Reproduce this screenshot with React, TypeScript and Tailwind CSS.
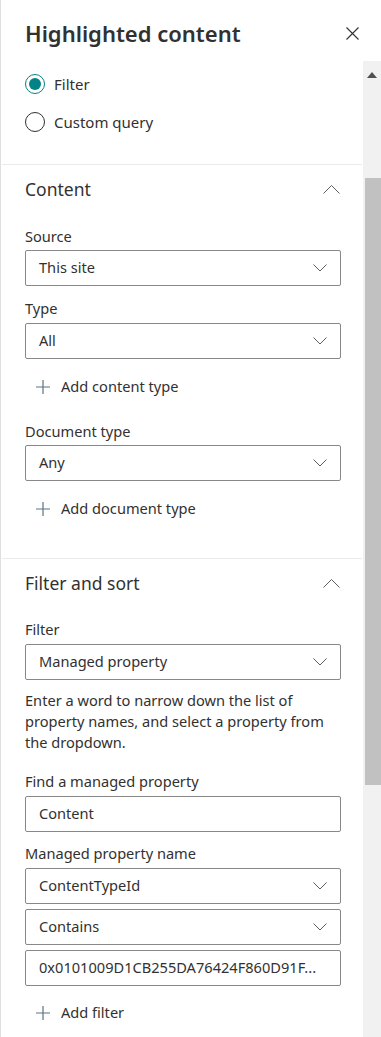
const font = { fontFamily: '"Segoe UI", "Noto Sans", "Open Sans", sans-serif' };

function ChevronDown() {
  return (
    <svg viewBox="0 0 14 8" className="h-[8px] w-[14px]" fill="none" stroke="#605e5c" strokeWidth="1">
      <path d="M0.5 0.5 L7 7 L13.5 0.5" />
    </svg>
  );
}

function ChevronUp() {
  return (
    <svg viewBox="0 0 17 9" className="h-[9px] w-[17px]" fill="none" stroke="#605e5c" strokeWidth="1">
      <path d="M0.5 8.5 L8.5 0.5 L16.5 8.5" />
    </svg>
  );
}

function Plus() {
  return (
    <svg viewBox="0 0 16 16" className="h-[16px] w-[16px]" fill="none" stroke="#5c7482" strokeWidth="1.2">
      <path d="M8 1 V15 M1 8 H15" />
    </svg>
  );
}

function Label({ children, className = "" }: { children: React.ReactNode; className?: string }) {
  return <div className={`h-[20px] text-[14.6px] leading-[20px] text-[#323130] ${className}`}>{children}</div>;
}

function Dropdown({ value, className = "" }: { value: string; className?: string }) {
  return (
    <div
      className={`flex h-[36px] items-center justify-between rounded-[2px] border border-[#8a8886] pl-[13px] pr-[13px] text-[14.6px] text-[#323130] ${className}`}
    >
      <span>{value}</span>
      <ChevronDown />
    </div>
  );
}

function TextBox({ value, className = "" }: { value: string; className?: string }) {
  return (
    <div
      className={`flex h-[36px] items-center overflow-hidden whitespace-nowrap rounded-[2px] border border-[#8a8886] px-[13px] text-[14.6px] text-[#323130] ${className}`}
    >
      {value}
    </div>
  );
}

function AddButton({ text, className = "" }: { text: string; className?: string }) {
  return (
    <div className={`flex h-[32px] items-center gap-[10px] pl-[10px] text-[14.6px] text-[#323130] ${className}`}>
      <Plus />
      <span>{text}</span>
    </div>
  );
}

function SectionHeader({ title }: { title: string }) {
  return (
    <div className="flex h-[48px] items-center justify-between pr-[1px]">
      <span className="text-[17.5px] text-[#323130]">{title}</span>
      <ChevronUp />
    </div>
  );
}

function Radio({ checked, label }: { checked?: boolean; label: string }) {
  return (
    <div className="flex h-[20px] items-center gap-[9px]">
      <div
        className={`flex h-[20px] w-[20px] items-center justify-center rounded-full border ${
          checked ? "border-[#038387]" : "border-[#323130]"
        }`}
      >
        {checked && <div className="h-[12px] w-[12px] rounded-full bg-[#038387]" />}
      </div>
      <span className="text-[15px] text-[#323130]">{label}</span>
    </div>
  );
}

export default function App() {
  return (
    <div className="h-[1037px] w-[381px] overflow-hidden border-l border-[#e1dfdd] bg-white" style={font}>
      {/* Header */}
      <div className="flex h-[61px] items-center justify-between pl-[24px] pr-[22px] pt-[5px]">
        <h1 className="text-[22px] font-semibold text-[#323130]">Highlighted content</h1>
        <svg viewBox="0 0 13 13" className="h-[13px] w-[13px]" fill="none" stroke="#323130" strokeWidth="1.1">
          <path d="M0.5 0.5 L12.5 12.5 M12.5 0.5 L0.5 12.5" />
        </svg>
      </div>

      <div className="flex h-[976px]">
        <div className="flex-1">
          {/* Query type */}
          <div className="mx-[1px] flex flex-col gap-[18px] border-b border-[#edebe9] pb-[32px] pl-[23px] pt-[13px]">
            <Radio checked label="Filter" />
            <Radio label="Custom query" />
          </div>

          {/* Content */}
          <div className="mx-[1px] border-b border-[#edebe9] pb-[33px] pl-[23px] pr-[21px]">
            <SectionHeader title="Content" />
            <Label className="mt-[13px]">Source</Label>
            <Dropdown value="This site" className="mt-[4px]" />
            <Label className="mt-[12px]">Type</Label>
            <Dropdown value="All" className="mt-[5px]" />
            <AddButton text="Add content type" className="mt-[12px]" />
            <Label className="mt-[18px]">Document type</Label>
            <Dropdown value="Any" className="mt-[4px]" />
            <AddButton text="Add document type" className="mt-[12px]" />
          </div>

          {/* Filter and sort */}
          <div className="mx-[1px] pl-[23px] pr-[21px]">
            <SectionHeader title="Filter and sort" />
            <Label className="mt-[12px]">Filter</Label>
            <Dropdown value="Managed property" className="mt-[5px]" />
            <p className="mt-[10px] text-[14.6px] leading-[21px] text-[#323130]">
              Enter a word to narrow down the list of property names, and select a property from the dropdown.
            </p>
            <Label className="mt-[18px]">Find a managed property</Label>
            <TextBox value="Content" className="mt-[5px]" />
            <Label className="mt-[11px]">Managed property name</Label>
            <Dropdown value="ContentTypeId" className="mt-[5px]" />
            <Dropdown value="Contains" className="mt-[5px]" />
            <TextBox value="0x0101009D1CB255DA76424F860D91F..." className="mt-[5px]" />
            <AddButton text="Add filter" className="mt-[11px]" />
          </div>
        </div>

        {/* Scrollbar */}
        <div className="flex w-[18px] flex-col bg-[#f1f1f1]">
          <div className="flex h-[28px] items-center justify-center">
            <svg viewBox="0 0 10 6" className="h-[6px] w-[10px]" fill="#505050">
              <path d="M0 6 L5 0 L10 6 Z" />
            </svg>
          </div>
          <div className="ml-[2px] mt-[89px] h-[607px] bg-[#c1c1c1]" />
        </div>
      </div>
    </div>
  );
}
